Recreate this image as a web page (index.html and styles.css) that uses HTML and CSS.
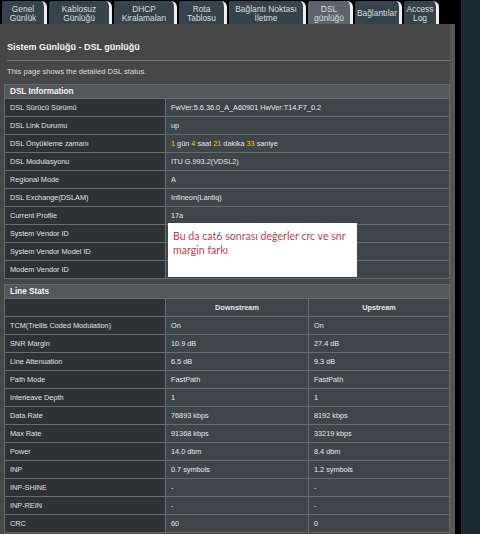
FILE: index.html
```html
<!DOCTYPE html>
<html lang="tr">
<head>
<meta charset="utf-8">
<title>Sistem Günlüğü - DSL günlüğü</title>
<link rel="stylesheet" href="styles.css">
</head>
<body>
<div class="page">
  <div class="main">
    <nav class="tabs">
      <div class="tab">Genel<br>Günlük</div>
      <div class="tab">Kablosuz<br>Günlüğü</div>
      <div class="tab">DHCP<br>Kiralamaları</div>
      <div class="tab">Rota<br>Tablosu</div>
      <div class="tab">Bağlantı Noktası<br>İletme</div>
      <div class="tab active">DSL<br>günlüğü</div>
      <div class="tab">Bağlantılar</div>
      <div class="tab">Access<br>Log</div>
    </nav>
    <section class="panel">
      <h1 class="title">Sistem Günlüğü - DSL günlüğü</h1>
      <p class="desc">This page shows the detailed DSL status.</p>
      <table class="grid info">
        <colgroup><col class="c-label"><col></colgroup>
        <thead><tr><th colspan="2" class="bar">DSL Information</th></tr></thead>
        <tbody>
          <tr><th>DSL Sürücü Sürümü</th><td>FwVer:5.6.36.0_A_A60901 HwVer:T14.F7_0.2</td></tr>
          <tr><th>DSL Link Durumu</th><td>up</td></tr>
          <tr><th>DSL Önyükleme zamanı</th><td><span class="num">1</span> gün <span class="num">4</span> saat <span class="num">21</span> dakika <span class="num">33</span> saniye</td></tr>
          <tr><th>DSL Modulasyonu</th><td>ITU G.993.2(VDSL2)</td></tr>
          <tr><th>Regional Mode</th><td>A</td></tr>
          <tr><th>DSL Exchange(DSLAM)</th><td>Infineon(Lantiq)</td></tr>
          <tr><th>Current Profile</th><td>17a</td></tr>
          <tr><th>System Vendor ID</th><td></td></tr>
          <tr><th>System Vendor Model ID</th><td></td></tr>
          <tr><th>Modem Vendor ID</th><td></td></tr>
        </tbody>
      </table>
      <table class="grid stats">
        <colgroup><col class="c-label"><col class="c-down"><col></colgroup>
        <thead>
          <tr><th colspan="3" class="bar">Line Stats</th></tr>
          <tr><th></th><td class="head">Downstream</td><td class="head">Upstream</td></tr>
        </thead>
        <tbody>
          <tr><th>TCM(Trellis Coded Modulation)</th><td>On</td><td>On</td></tr>
          <tr><th>SNR Margin</th><td>10.9 dB</td><td>27.4 dB</td></tr>
          <tr><th>Line Attenuation</th><td>6.5 dB</td><td>9.3 dB</td></tr>
          <tr><th>Path Mode</th><td>FastPath</td><td>FastPath</td></tr>
          <tr><th>Interleave Depth</th><td>1</td><td>1</td></tr>
          <tr><th>Data Rate</th><td>76893 kbps</td><td>8192 kbps</td></tr>
          <tr><th>Max Rate</th><td>91368 kbps</td><td>33219 kbps</td></tr>
          <tr><th>Power</th><td>14.0 dbm</td><td>8.4 dbm</td></tr>
          <tr><th>INP</th><td>0.7 symbols</td><td>1.2 symbols</td></tr>
          <tr><th>INP-SHINE</th><td>-</td><td>-</td></tr>
          <tr><th>INP-REIN</th><td>-</td><td>-</td></tr>
          <tr><th>CRC</th><td>60</td><td>0</td></tr>
        </tbody>
      </table>
      <div class="note">Bu da cat6 sonrası değerler crc ve snr margin farkı</div>
    </section>
  </div>
  <div class="gutter"></div>
  <div class="side"></div>
</div>
</body>
</html>
```
FILE: styles.css
```css
* { box-sizing: border-box; }
html, body { margin: 0; padding: 0; }
body {
  background: #000;
  font-family: "Liberation Sans", Arial, sans-serif;
  color: #e2e2e2;
}
.page {
  display: flex;
  width: 480px;
  height: 534px;
  overflow: hidden;
  background: #000;
}
.main { width: 455px; display: flex; flex-direction: column; }
.gutter { width: 6px; background: #000; }
.side { flex: 1; background: #1c2a33; }

.tabs {
  display: grid;
  grid-template-columns: 45px 63px 63px 48px 77px 45px 47px 35px;
  column-gap: 2px;
  height: 24px;
  padding: 1px 0 0 2px;
  background: #000;
}
.tab {
  background: #36434a;
  border-right: 3px solid #ededed;
  border-radius: 2px 6px 0 0;
  color: #dcdcdc;
  font-size: 8.4px;
  line-height: 9px;
  text-align: center;
  padding-top: 2px;
  white-space: nowrap;
  overflow: hidden;
  display: flex;
  align-items: center;
  justify-content: center;
}
.tab.active { background: #5b6468; }

.panel {
  position: relative;
  flex: 1;
  background: #474747;
  padding: 0 0 0 4px;
  border-right: 5px solid #575757;
}
.title {
  margin: 0 0 0 3px;
  padding: 17px 0 7px 0;
  font-size: 9px;
  line-height: 12px;
  font-weight: bold;
  color: #f4f4f4;
  border-bottom: 1px solid #7a7a7a;
}
.desc {
  margin: 5px 0 7px 3px;
  font-size: 7.6px;
  line-height: 11px;
  color: #dedede;
}

.grid {
  width: 446px;
  border-collapse: collapse;
  table-layout: fixed;
  font-size: 7.3px;
}
.grid th, .grid td {
  border: 1px solid #656c6f;
  padding: 0 0 0 5px;
  height: 18px;
  line-height: 17px;
  text-align: left;
  font-weight: normal;
  white-space: nowrap;
  overflow: hidden;
}
.grid tbody th, .grid thead tr + tr th { background: #2e3235; color: #e0e0e0; }
.grid td { background: #3e464a; color: #e6e6e6; }
.grid .bar {
  background: #53585a;
  color: #f6f6f6;
  font-weight: bold;
  font-size: 8.2px;
  height: 14px;
  line-height: 13px;
}
.grid .head { text-align: center; font-weight: bold; padding: 0; }
.c-label { width: 161px; }
.c-down { width: 143px; }
.stats { margin-top: 5px; }
.num { color: #f2c534; }

.note {
  position: absolute;
  left: 168px;
  top: 199px;
  width: 189px;
  height: 54px;
  background: #fff;
  color: #c0404e;
  font-family: Lato, "Open Sans", sans-serif;
  font-size: 10.6px;
  line-height: 14px;
  padding: 6px 4px 0 5px;
}
```
